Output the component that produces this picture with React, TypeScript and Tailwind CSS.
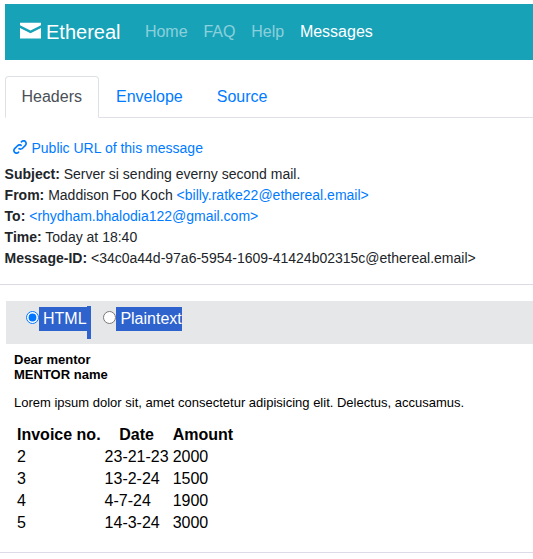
const navLinks = ['Home', 'FAQ', 'Help'];

const invoices = [
  ['2', '23-21-23', '2000'],
  ['3', '13-2-24', '1500'],
  ['4', '4-7-24', '1900'],
  ['5', '14-3-24', '3000'],
];

function EnvelopeIcon() {
  return (
    <svg viewBox="0 0 8 8" className="mb-1 h-[21px] w-[21px] shrink-0" fill="currentColor">
      <path d="M0 0v1l4 2 4-2v-1h-8zm0 2v4h8v-4l-4 2-4-2z" transform="translate(0 1)" />
    </svg>
  );
}

function LinkIcon() {
  return (
    <svg viewBox="0 0 8 8" className="mb-[3px] h-[14px] w-[14px] shrink-0" fill="currentColor">
      <path d="M5.88.03c-.18.01-.36.03-.53.09-.27.1-.53.25-.75.47a.5.5 0 1 0 .69.69c.11-.11.24-.17.38-.22.35-.12.78-.07 1.06.22.39.39.39 1.04 0 1.44l-1.5 1.5c-.44.44-.8.48-1.06.47-.26-.01-.41-.13-.41-.13a.5.5 0 1 0-.5.88s.34.22.84.25c.5.03 1.2-.16 1.81-.78l1.5-1.5c.78-.78.78-2.04 0-2.81-.28-.28-.61-.45-.97-.53-.18-.04-.38-.04-.56-.03zm-2 2.31c-.5-.02-1.19.15-1.78.75l-1.5 1.5c-.78.78-.78 2.04 0 2.81.56.56 1.36.72 2.06.47.27-.1.53-.25.75-.47a.5.5 0 1 0-.69-.69c-.11.11-.24.17-.38.22-.35.12-.78.07-1.06-.22-.39-.39-.39-1.04 0-1.44l1.5-1.5c.4-.4.75-.45 1.03-.44.28.01.47.09.47.09a.5.5 0 1 0 .44-.88s-.34-.2-.84-.22z" />
    </svg>
  );
}

export default function App() {
  return (
    <div className="h-[559px] w-full overflow-hidden bg-white pt-1 font-['Liberation_Sans',Arial,sans-serif] text-base text-[#212529]">
      <nav className="ml-[5px] flex h-14 items-center bg-[#17a2b8] pl-[15px] text-white">
        <a className="flex items-center text-xl leading-[30px]">
          <EnvelopeIcon />
          <span className="ml-[5px]">Ethereal</span>
        </a>
        <div className="ml-[24.4px] flex gap-[15.8px]">
          {navLinks.map((label) => (
            <a key={label} className="text-white/50">{label}</a>
          ))}
          <a>Messages</a>
        </div>
      </nav>

      <div className="ml-[5px] mt-4 flex h-[42px] border-b border-[#dee2e6]">
        <a className="h-[42px] w-[94px] rounded-t border border-b-white border-[#dee2e6] bg-white px-[15.5px] py-2 text-[#495057]">Headers</a>
        <a className="px-[17px] py-[9px] text-[#007bff]">Envelope</a>
        <a className="px-[17px] py-[9px] text-[#007bff]">Source</a>
      </div>

      <section className="ml-[4.6px] pt-5 text-sm leading-[21px]">
        <a className="mb-[5px] ml-[8.4px] flex items-center text-[#007bff]">
          <LinkIcon />
          <span className="ml-[4.5px]">Public URL of this message</span>
        </a>
        <div><b>Subject:</b> Server si sending everny second mail.</div>
        <div><b>From:</b> Maddison Foo Koch <a className="text-[#007bff]">&lt;billy.ratke22@ethereal.email&gt;</a></div>
        <div><b>To:</b> <a className="text-[#007bff]">&lt;rhydham.bhalodia122@gmail.com&gt;</a></div>
        <div><b>Time:</b> Today at 18:40</div>
        <div><b>Message-ID:</b> &lt;34c0a44d-97a6-5954-1609-41424b02315c@ethereal.email&gt;</div>
      </section>

      <hr className="mt-[15px] border-[#dcdbe3]" />

      <div className="ml-[6px] mt-4 flex h-[43px] items-start bg-[#e5e7e9] pl-5 pt-[5px] text-white">
        <label className="flex">
          <input type="radio" name="format" defaultChecked className="mt-[5px] h-[13px] w-[13px] accent-[#0075ff]" />
          <span className="mt-px h-6 w-12 bg-[#2e62cd] pl-1">HTML</span>
          <span className="h-[33px] w-1 bg-[#2e62cd]" />
        </label>
        <label className="ml-3 flex">
          <input type="radio" name="format" className="mt-[5px] h-[13px] w-[13px]" />
          <span className="mt-px h-6 w-[66px] whitespace-nowrap bg-[#2e62cd] pl-[4.4px]">Plaintext</span>
        </label>
      </div>

      <article className="ml-[14px] pt-2 text-black">
        <div className="text-[13px] leading-[15px]">
          <p className="font-bold">Dear mentor<br />MENTOR name</p>
          <p className="mt-[13px]">Lorem ipsum dolor sit, amet consectetur adipisicing elit. Delectus, accusamus.</p>
        </div>
        <table className="mt-[13px] border-separate border-spacing-[2px] leading-[18px]">
          <thead>
            <tr>
              <th className="p-px">Invoice no.</th>
              <th className="p-px">Date</th>
              <th className="p-px">Amount</th>
            </tr>
          </thead>
          <tbody>
            {invoices.map((row) => (
              <tr key={row[0]}>
                {row.map((value) => (
                  <td key={value} className="p-px">{value}</td>
                ))}
              </tr>
            ))}
          </tbody>
        </table>
      </article>

      <hr className="mt-[17px] border-[#dcdbe8]" />
    </div>
  );
}
